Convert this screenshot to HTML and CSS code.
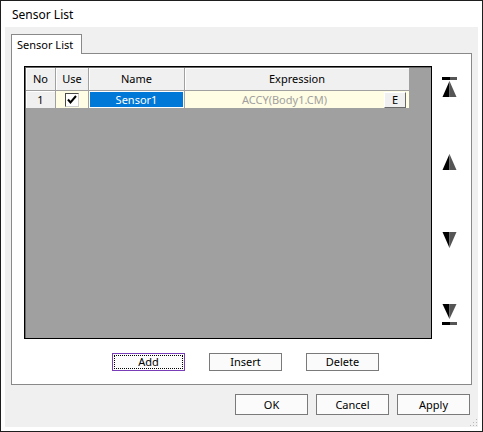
FILE: index.html
```html
<!DOCTYPE html>
<html lang="en">
  <head>
    <meta charset="UTF-8" />
    <title>Sensor List</title>
    <link rel="stylesheet" href="styles.css">
  </head>
  <body>
    <div class="window">
      <div class="titlebar">Sensor List</div>
      <div class="client">
        <div class="tabs">
          <div class="tab">Sensor List</div>
        </div>
        <div class="panel">
          <div class="panel-top">
            <div class="grid">
              <div class="grid-row header">
                <div class="cell col-no">No</div>
                <div class="cell col-use">Use</div>
                <div class="cell col-name">Name</div>
                <div class="cell col-expr">Expression</div>
              </div>
              <div class="grid-row">
                <div class="cell col-no rownum">1</div>
                <div class="cell col-use yellow">
                  <span class="check">
                    <svg width="12" height="12" viewBox="0 0 12 12">
                      <path d="M2 5.5 L4.5 8.5 L10 2" fill="none" stroke="#000" stroke-width="2"/>
                    </svg>
                  </span>
                </div>
                <div class="cell col-name selected"><span>Sensor1</span></div>
                <div class="cell col-expr yellow">
                  <span class="expr-text">ACCY(Body1.CM)</span>
                  <span class="ebtn">E</span>
                </div>
              </div>
            </div>
            <div class="arrows">
              <svg class="arrow first" width="17" height="22" viewBox="0 0 17 22">
                <rect x="1" y="1" width="8" height="3" fill="#000"/>
                <rect x="9" y="1" width="7" height="3" fill="#555"/>
                <polygon points="8.5,5 1.5,21 8.5,21" fill="#000"/>
                <polygon points="8.5,5 15.5,21 8.5,21" fill="#555"/>
              </svg>
              <svg class="arrow up" width="17" height="16" viewBox="0 0 17 16">
                <polygon points="8.5,0 1.5,16 8.5,16" fill="#000"/>
                <polygon points="8.5,0 15.5,16 8.5,16" fill="#555"/>
              </svg>
              <svg class="arrow down" width="17" height="16" viewBox="0 0 17 16">
                <polygon points="1.5,0 8.5,0 8.5,16" fill="#000"/>
                <polygon points="8.5,0 15.5,0 8.5,16" fill="#555"/>
              </svg>
              <svg class="arrow last" width="17" height="22" viewBox="0 0 17 22">
                <polygon points="1.5,0 8.5,0 8.5,15" fill="#000"/>
                <polygon points="8.5,0 15.5,0 8.5,15" fill="#555"/>
                <rect x="1" y="18" width="8" height="3" fill="#000"/>
                <rect x="9" y="18" width="7" height="3" fill="#555"/>
              </svg>
            </div>
          </div>
          <div class="actions">
            <button class="btn small focused"><span>Add</span></button>
            <button class="btn small">Insert</button>
            <button class="btn small">Delete</button>
          </div>
        </div>
        <div class="footer">
          <button class="btn">OK</button>
          <button class="btn">Cancel</button>
          <button class="btn">Apply</button>
        </div>
        <svg class="grip" width="9" height="9" viewBox="0 0 9 9">
          <rect x="7" y="1" width="1" height="1" fill="#b8b8b8"/>
          <rect x="4" y="4" width="1" height="1" fill="#b8b8b8"/>
          <rect x="7" y="4" width="1" height="1" fill="#b8b8b8"/>
          <rect x="1" y="7" width="1" height="1" fill="#b8b8b8"/>
          <rect x="4" y="7" width="1" height="1" fill="#b8b8b8"/>
          <rect x="7" y="7" width="1" height="1" fill="#b8b8b8"/>
        </svg>
      </div>
    </div>
  </body>
</html>
```

FILE: styles.css
```css
* {
  box-sizing: border-box;
}
body {
  margin: 0;
  font-family: "Noto Sans", "Liberation Sans", sans-serif;
  font-size: 11px;
  color: #000;
  background-color: #fff;
}
.window {
  width: 483px;
  height: 432px;
  border: 1px solid #1e1e1e;
  background-color: #fff;
  display: flex;
  flex-direction: column;
}
.titlebar {
  height: 26px;
  padding-left: 11px;
  line-height: 28px;
  font-size: 12px;
}
.client {
  position: relative;
  flex: 1;
  margin: 0 4px 4px 4px;
  background-color: #f0f0f0;
  padding: 7px 0 0 6px;
}
.tabs {
  display: flex;
}
.tab {
  position: relative;
  z-index: 1;
  width: 71px;
  height: 20px;
  margin-bottom: -1px;
  border: 1px solid #898989;
  border-bottom: none;
  background-color: #fff;
  padding-left: 5px;
  line-height: 19px;
}
.panel {
  width: 461px;
  height: 332px;
  border: 1px solid #898989;
  background-color: #fff;
  padding: 12px 0 0 12px;
}
.panel-top {
  display: flex;
  gap: 9px;
}
.grid {
  width: 408px;
  height: 273px;
  border: 1px solid #000;
  background-color: #a0a0a0;
  padding: 1px 0 0 1px;
  box-shadow: inset 1px 1px 0 #696969;
}
.grid-row {
  display: flex;
}
.cell {
  height: 18px;
  border-right: 1px solid #a0a0a0;
  border-bottom: 1px solid #a0a0a0;
  display: flex;
  align-items: center;
  justify-content: center;
  line-height: 16px;
}
.header .cell {
  height: 23px;
  background-color: #f0f0f0;
  box-shadow: inset 1px 1px 0 #fff;
}
.col-no {
  width: 30px;
}
.col-use {
  width: 33px;
}
.col-name {
  width: 96px;
}
.col-expr {
  width: 225px;
}
.rownum {
  background-color: #f0f0f0;
  box-shadow: inset 1px 1px 0 #fff;
}
.yellow {
  background-color: #fffde3;
}
.check {
  display: flex;
  width: 14px;
  height: 14px;
  background-color: #fff;
  border: 1px solid #4a4a4a;
  border-right-color: #d0d0d0;
  border-bottom-color: #d0d0d0;
}
.selected {
  padding: 1px;
  background-color: #fff;
}
.selected span {
  width: 100%;
  height: 100%;
  background-color: #0078d7;
  color: #fff;
  text-align: center;
  line-height: 16px;
}
.col-expr.yellow {
  justify-content: space-between;
  padding-right: 3px;
}
.expr-text {
  flex: 1;
  text-align: center;
  color: #a0a0a0;
}
.ebtn {
  width: 22px;
  height: 16px;
  background-color: #f0f0f0;
  border: 1px solid #fff;
  border-right-color: #696969;
  border-bottom-color: #696969;
  text-align: center;
  line-height: 14px;
}
.arrows {
  display: flex;
  flex-direction: column;
  width: 17px;
}
.arrow.first {
  margin-top: 10px;
}
.arrow.up {
  margin-top: 56px;
}
.arrow.down {
  margin-top: 62px;
}
.arrow.last {
  margin-top: 56px;
}
.actions {
  display: flex;
  gap: 24px;
  margin-top: 14px;
  padding-left: 88px;
}
.btn {
  width: 73px;
  height: 21px;
  padding: 0;
  border: 1px solid #7a7a7a;
  background-color: #fbfbfb;
  font-family: inherit;
  font-size: 11px;
  color: #000;
}
.btn.small {
  height: 18px;
  line-height: 14px;
}
.btn.focused {
  border-color: #7a3db8;
  padding: 1px;
}
.btn.focused span {
  display: block;
  height: 100%;
  border: 1px dotted #000;
  line-height: 12px;
}
.footer {
  display: flex;
  justify-content: flex-end;
  gap: 8px;
  margin-top: 9px;
  padding-right: 8px;
}
.grip {
  position: absolute;
  right: 0;
  bottom: 0;
}
```
